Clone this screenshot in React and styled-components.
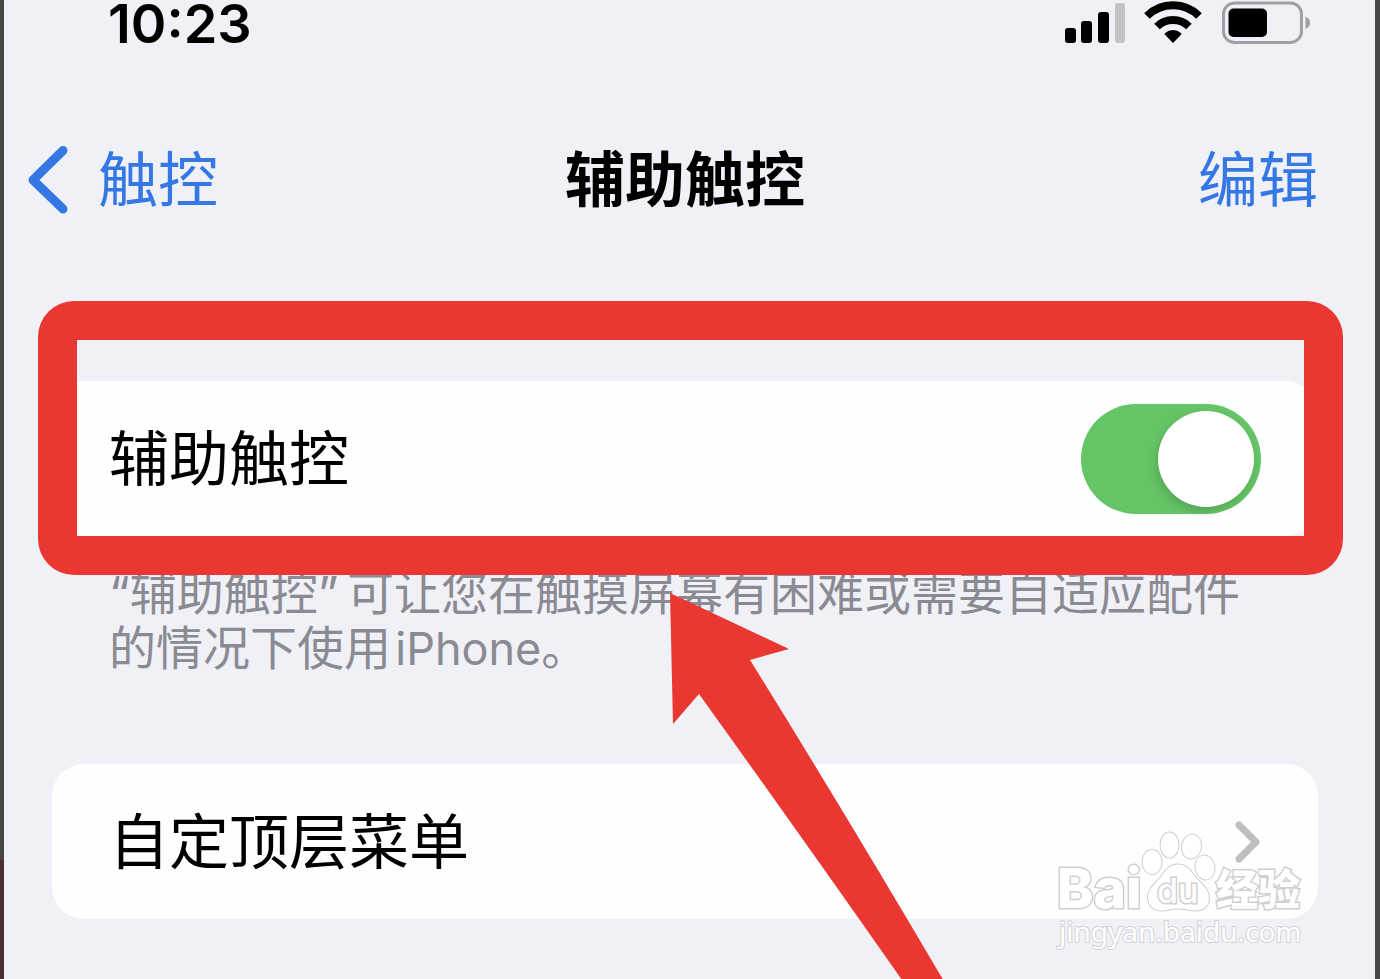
import React, { useState } from "react";
import styled, { createGlobalStyle } from "styled-components";

function StatusIcons() {
  return (
    <svg width="248" height="46" viewBox="0 0 248 46" aria-hidden="true">
      <rect x="2" y="28" width="11" height="15" rx="3" />
      <rect x="18" y="21" width="11" height="22" rx="3" />
      <rect x="35" y="12" width="11" height="31" rx="3" />
      <rect x="52" y="3" width="10" height="40" rx="3" fill="#c2c2c5" />
      <g fill="none" stroke="#000" strokeWidth="8">
        <path d="M84 16a37 37 0 0 1 52 0" />
        <path d="M94 26.500a23 23 0 0 1 32 0" />
      </g>
      <path d="M110 43l-8-8.200q-.9-1 .1-1.900a12 12 0 0 1 15.800 0q1 .9.1 1.900z" />
      <rect
        x="160.5"
        y="3"
        width="78"
        height="39.5"
        rx="11"
        fill="none"
        stroke="#a0a0a4"
        strokeWidth="3"
      />
      <rect x="165.5" y="8.5" width="38.5" height="28.5" rx="5" />
      <path d="M242.5 16.5q4.5 2 4.5 6.2t-4.5 6.2z" fill="#a0a0a4" />
    </svg>
  );
}

function BaiduLogo() {
  return (
    <svg width="252" height="84" viewBox="0 0 252 84" aria-hidden="true">
      <ellipse cx="97" cy="34" rx="9.5" ry="12" />
      <ellipse cx="114.5" cy="17" rx="9" ry="12.5" />
      <ellipse cx="136.5" cy="18.5" rx="9.5" ry="12" transform="rotate(10 136.5 18.5)" />
      <ellipse cx="150" cy="39.5" rx="9.5" ry="12" transform="rotate(-8 150 39.5)" />
      <path d="M123 36.5c8 0 12 5 16 11 5 7 15 12 15 23 0 8-6 12-13 12-6 0-11-2-18-2s-10 2-16 2c-9 0-14-5-14-13 0-10 9-15 14-22 4-6 8-11 16-11z" />
      <text x="2" y="80" fontSize="55">
        Bai
      </text>
      <text className="du" x="102" y="75" fontSize="34">
        du
      </text>
      <text x="161" y="77" fontSize="42">
        经验
      </text>
    </svg>
  );
}

function App() {
  const [enabled, setEnabled] = useState(true);

  return (
    <>
      <GlobalStyle />
      <Backdrop>
        <Screen>
          <StatusBar>
            <Clock>10:23</Clock>
            <StatusIcons />
          </StatusBar>

          <NavBar>
            <BackButton type="button">
              <svg width="42" height="70" viewBox="0 0 42 70" aria-hidden="true">
                <path d="M35 5.5L5 35L35 64" />
              </svg>
              触控
            </BackButton>
            <Title>辅助触控</Title>
            <NavButton type="button">编辑</NavButton>
          </NavBar>

          <Group>
            <Card as="label" htmlFor="assistive-touch">
              辅助触控
              <Switch
                id="assistive-touch"
                type="checkbox"
                checked={enabled}
                onChange={(e) => setEnabled(e.target.checked)}
              />
            </Card>
            <Footnote>
              “辅助触控”&#8201;可让您在触摸屏幕有困难或需要自适应配件的情况下使用&#8202;
              <Latin>iPhone</Latin>。
            </Footnote>
            <Highlight />
            <Arrow width="280" height="400" viewBox="0 0 280 400" aria-hidden="true">
              <path d="M0 0L119 56L80 67Q180 228 285 407L246 407Q136 250 29 101L3 131z" />
            </Arrow>
          </Group>

          <Card href="#menu">
            自定顶层菜单
            <svg width="27" height="44" viewBox="0 0 27 44" aria-hidden="true">
              <path d="M5 5L22 22L5 39" />
            </svg>
          </Card>

          <Watermark>
            <BaiduLogo />
            <span>jingyan.baidu.com</span>
          </Watermark>
        </Screen>
      </Backdrop>
    </>
  );
}

const GlobalStyle = createGlobalStyle`
  * {
    box-sizing: border-box;
  }

  body {
    margin: 0;
    color: #000;
    font-family: Inter, "Noto Sans CJK SC", sans-serif;
  }
`;

const Backdrop = styled.div`
  min-height: 100vh;
  display: flex;
  padding: 0 5px 0 4px;
  background: linear-gradient(to right, transparent 50%, #484848 50%),
    linear-gradient(#484644 860px, #4a3030 860px);
`;

const Screen = styled.main`
  position: relative;
  flex: 1;
  min-width: 0;
  min-height: 100vh;
  max-height: 100vh;
  overflow: hidden;
  padding: 0 57px 0 48px;
  background: #f0f1f6;
`;

const StatusBar = styled.header`
  display: flex;
  align-items: center;
  justify-content: space-between;
  height: 48px;
  padding: 0 7px 0 56px;

  svg {
    align-self: flex-start;
  }
`;

const Clock = styled.time`
  font-size: 54px;
  font-weight: 600;
  line-height: 48px;
`;

const NavBar = styled.nav`
  display: grid;
  grid-template-columns: 1fr auto 1fr;
  align-items: center;
  height: 100px;
  margin: 82px 0 151px;
`;

const NavButton = styled.button`
  display: flex;
  align-items: center;
  justify-self: end;
  padding: 0;
  border: 0;
  background: none;
  color: #3578e5;
  font-family: inherit;
  font-size: 60px;
  line-height: 80px;
  cursor: pointer;
`;

const BackButton = styled(NavButton)`
  justify-self: start;
  gap: 28px;
  margin-left: -24px;

  path {
    fill: none;
    stroke: currentColor;
    stroke-width: 9;
    stroke-linecap: round;
    stroke-linejoin: round;
  }
`;

const Title = styled.h1`
  margin: 0;
  font-size: 60px;
  font-weight: 600;
  line-height: 80px;
`;

const Group = styled.section`
  position: relative;
  margin-bottom: 87px;
`;

const Card = styled.a`
  display: flex;
  align-items: center;
  justify-content: space-between;
  min-height: 155px;
  padding: 0 57px;
  border-radius: 32px;
  background: #fdfefe;
  color: #000;
  font-size: 60px;
  line-height: 80px;
  text-decoration: none;

  path {
    fill: none;
    stroke: #bfbfc2;
    stroke-width: 7;
    stroke-linecap: round;
    stroke-linejoin: round;
  }
`;

const Switch = styled.input`
  appearance: none;
  width: 180px;
  height: 110px;
  margin: 0;
  padding: 7px;
  border-radius: 55px;
  background: ${({ checked }) => (checked ? "#65c466" : "#e9e9eb")};
  cursor: pointer;

  &::before {
    content: "";
    display: block;
    width: 96px;
    height: 96px;
    margin-left: ${({ checked }) => (checked ? "auto" : "0")};
    border-radius: 50%;
    background: #fff;
    box-shadow: -2px 5px 10px rgba(0, 0, 0, 0.15);
  }
`;

const Footnote = styled.p`
  margin: 29px 0 0;
  padding: 0 57px 1px;
  color: #8a8a92;
  font-size: 47px;
  line-height: 55px;
`;

const Latin = styled.span`
  font-size: 45px;
`;

const Highlight = styled.div`
  position: absolute;
  top: -80px;
  left: -14px;
  right: -25px;
  height: 274px;
  border: 39px solid #ea3732;
  border-radius: 36px;
  pointer-events: none;
`;

const Arrow = styled.svg`
  position: absolute;
  top: 212px;
  left: 618px;
  overflow: visible;
  fill: #ea3732;
  pointer-events: none;
`;

const Watermark = styled.div`
  position: absolute;
  right: 68px;
  bottom: 29px;
  display: flex;
  flex-direction: column;
  color: #fff;
  pointer-events: none;

  svg {
    overflow: visible;
    fill: #fff;
    stroke: #cfcfd1;
    stroke-width: 2px;
    paint-order: stroke fill;
  }

  text {
    font-weight: 800;
    stroke-width: 3px;
  }

  .du {
    font-weight: 500;
  }

  span {
    padding-left: 4px;
    font-family: "Noto Sans", sans-serif;
    font-size: 28px;
    line-height: 38px;
    paint-order: stroke fill;
    -webkit-text-stroke: 2px #d2d2d4;
  }
`;

export default App;
